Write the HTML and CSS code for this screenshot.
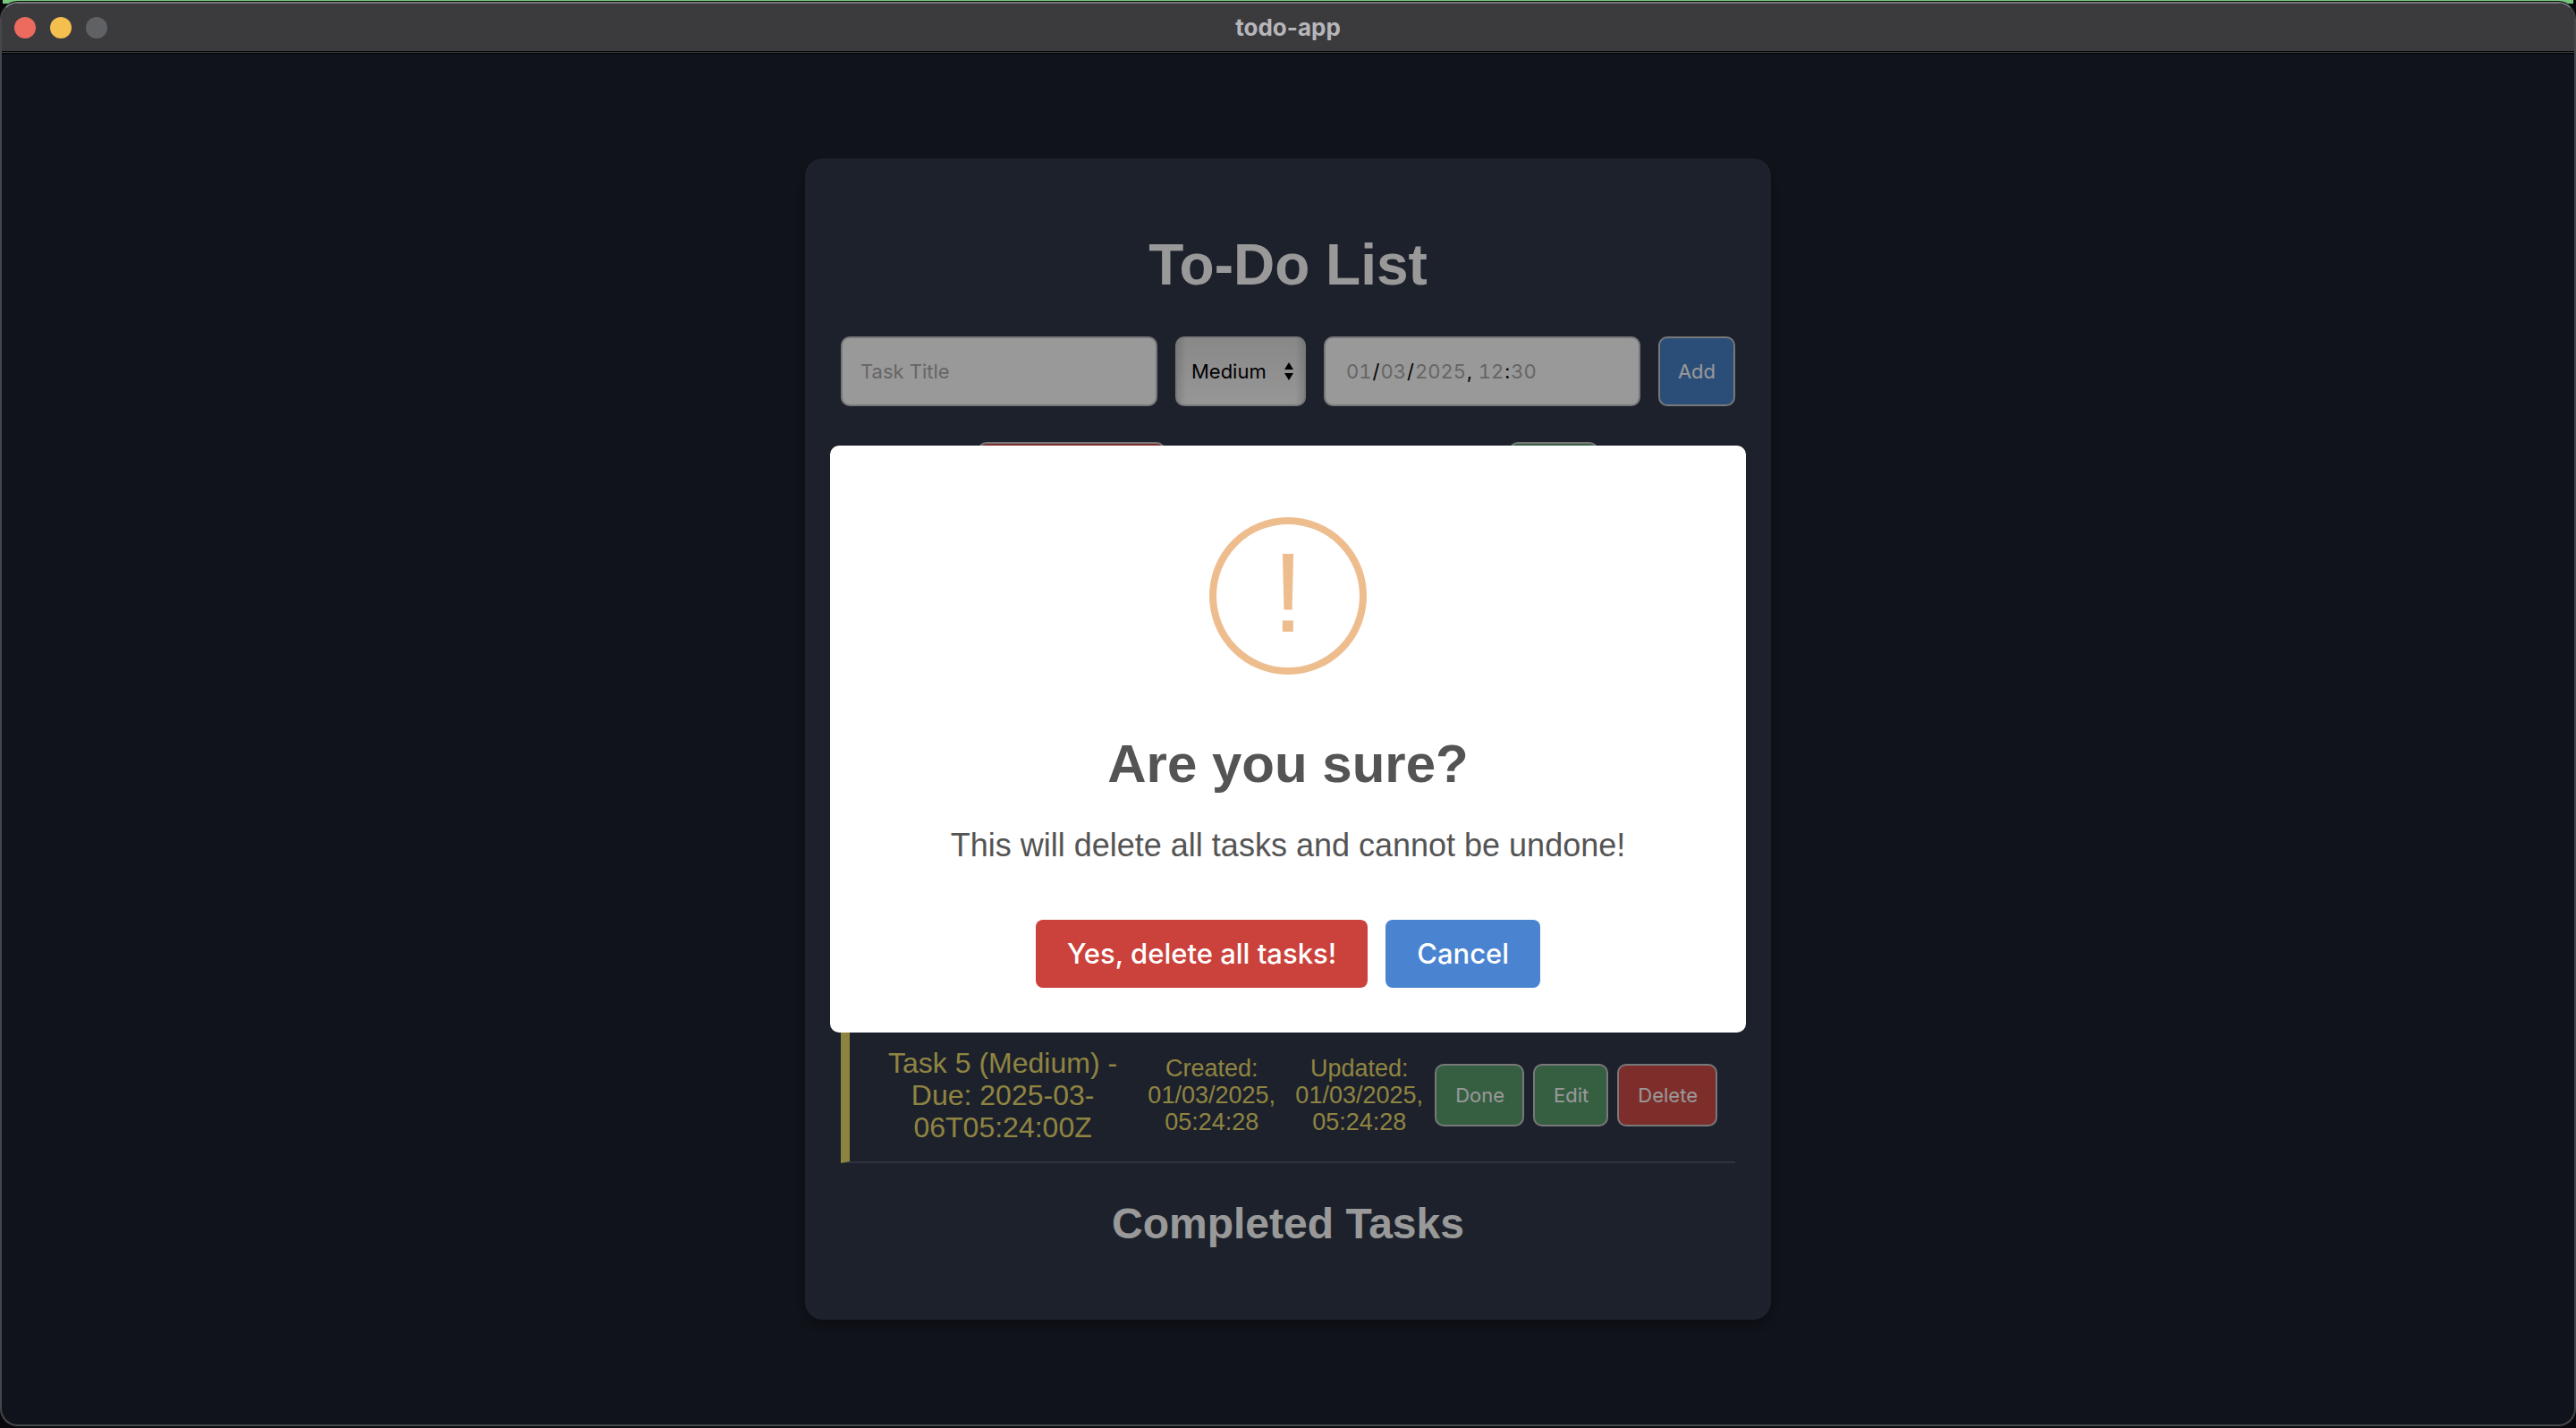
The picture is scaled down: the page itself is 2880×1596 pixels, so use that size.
FILE: index.html
```html
<!DOCTYPE html>
<html lang="en">
<head>
<meta charset="utf-8">
<title>todo-app</title>
<link rel="stylesheet" href="styles.css">
</head>
<body>
<div class="window">
  <header class="titlebar">
    <div class="lights">
      <button class="light light-close" type="button" aria-label="Close"></button>
      <button class="light light-minimise" type="button" aria-label="Minimise"></button>
      <button class="light light-zoom" type="button" aria-label="Zoom" disabled></button>
    </div>
    <span class="window-title">todo-app</span>
  </header>
  <div class="content">
    <main class="card">
      <h1 class="page-title">To-Do List</h1>
      <form class="task-form">
        <input class="field" type="text" placeholder="Task Title" aria-label="Task title">
        <div class="select-wrap">
          <select class="select" aria-label="Priority">
            <option>Low</option>
            <option selected>Medium</option>
            <option>High</option>
          </select>
          <svg class="select-arrows" viewBox="0 0 10 20" aria-hidden="true"><path d="M5 0 10 8H0zM5 20 0 12h10z"/></svg>
        </div>
        <input class="field field-date" type="datetime-local" value="2025-01-03T12:30" aria-label="Due date">
        <button class="btn btn-blue btn-add" type="button">Add</button>
      </form>
      <div class="toolbar">
        <button class="btn btn-red tool-wide" type="button" aria-label="Delete all tasks"></button>
        <button class="btn btn-green tool-narrow" type="button" aria-label="Export"></button>
      </div>
      <ul class="task-list">
        <li class="task">
          <span class="task-name">Task 5 (Medium) - Due: 2025-03-06T05:24:00Z</span>
          <span class="task-date">Created: 01/03/2025, 05:24:28</span>
          <span class="task-date">Updated: 01/03/2025, 05:24:28</span>
          <div class="task-actions">
            <button class="btn btn-green" type="button">Done</button>
            <button class="btn btn-green" type="button">Edit</button>
            <button class="btn btn-red" type="button">Delete</button>
          </div>
        </li>
      </ul>
      <h2 class="section-title">Completed Tasks</h2>
    </main>
    <div class="backdrop">
      <section class="modal" role="dialog" aria-modal="true" aria-labelledby="modal-title">
        <div class="modal-icon">!</div>
        <h2 class="modal-title" id="modal-title">Are you sure?</h2>
        <p class="modal-text">This will delete all tasks and cannot be undone!</p>
        <div class="modal-actions">
          <button class="modal-btn modal-confirm" type="button">Yes, delete all tasks!</button>
          <button class="modal-btn modal-cancel" type="button">Cancel</button>
        </div>
      </section>
    </div>
  </div>
</div>
</body>
</html>
```
FILE: styles.css
```css
* { box-sizing: border-box; }

body {
  margin: 0;
  padding: 2px 0;
  min-height: 100vh;
  display: flex;
  background: linear-gradient(#76c97e, #76c97e) center top / calc(100% - 6px) 4px no-repeat #0a080d;
  font-family: "Liberation Sans", Arial, sans-serif;
}

.window {
  flex: 1;
  display: flex;
  flex-direction: column;
  border-radius: 20px;
  overflow: hidden;
  border: 2px solid #46474b;
  border-top-color: #77787a;
  box-shadow: 0 0 0 1px #0b120e;
  background: #1c212d;
}

.titlebar {
  display: grid;
  grid-template-columns: 1fr auto 1fr;
  align-items: center;
  height: 56px;
  padding: 0 14px 3px;
  background: #3b3b3e;
  box-shadow: inset 0 -1px #000, inset 0 -2px #444, inset 0 -3px #000;
}

.lights { display: flex; gap: 16px; }

.light {
  width: 24px;
  height: 24px;
  padding: 0;
  border: 0;
  border-radius: 50%;
}
.light-close { background: #ed6a5e; }
.light-minimise { background: #f4bf4f; }
.light-zoom { background: #606165; }

.window-title {
  font: 700 26px/30px Inter, sans-serif;
  color: #b6b6ba;
}

.content {
  position: relative;
  flex: 1;
  display: flex;
  align-items: center;
  justify-content: center;
}

.card {
  width: 100%;
  max-width: 1080px;
  padding: 40px;
  border-radius: 20px;
  background: #303848;
  box-shadow: 0 8px 16px rgba(0, 0, 0, 0.3);
  color: #fff;
  text-align: center;
}

.page-title {
  margin: 43px 0;
  font-size: 64px;
  line-height: 73px;
}

.task-form { display: flex; gap: 20px; }

.field, .select, .btn {
  font: 400 22px/26px Inter, sans-serif;
  border: 2px solid #c8c8cc;
  border-radius: 10px;
}

.field {
  flex: 1;
  min-width: 0;
  height: 78px;
  padding: 0 20px;
  background: #fff;
  color: #000;
}
.field::placeholder { color: #aaa; opacity: 1; }

.field-date {
  padding: 0 18px 0 22px;
  font-variant-numeric: tabular-nums;
}
.field-date::-webkit-calendar-picker-indicator,
.field-date::-webkit-datetime-edit-ampm-field { display: none; }
.field-date::-webkit-datetime-edit-month-field,
.field-date::-webkit-datetime-edit-day-field,
.field-date::-webkit-datetime-edit-year-field,
.field-date::-webkit-datetime-edit-hour-field,
.field-date::-webkit-datetime-edit-minute-field { color: #aaa; }

.select-wrap { position: relative; }
.select {
  appearance: none;
  width: 146px;
  height: 78px;
  padding: 0 16px;
  color: #000;
  background: linear-gradient(90deg, rgba(0,0,0,.12), transparent 10px, transparent calc(100% - 10px), rgba(0,0,0,.12)), linear-gradient(#e4e4e4, #fbfbfb);
}
.select-arrows {
  position: absolute;
  right: 14px;
  top: 29px;
  width: 10px;
  height: 20px;
}

.btn {
  min-height: 70px;
  padding: 0 20px;
  color: #fff;
}
.btn-blue { background: #4982c8; }
.btn-green { background: #5a9e6e; }
.btn-red { background: #d24d46; }

.toolbar {
  display: flex;
  justify-content: space-between;
  margin: 40px 0;
  padding: 0 153px;
}
.tool-wide { width: 210px; }
.tool-narrow { width: 100px; }

.task-list {
  display: flex;
  flex-direction: column;
  justify-content: flex-end;
  min-height: 696px;
  margin: 0;
  padding: 0;
  list-style: none;
}

.task {
  display: grid;
  grid-template-columns: 1fr 165px 165px auto;
  align-items: center;
  padding: 20px;
  border-left: 10px solid #eddc6e;
  border-bottom: 2px solid #4e5567;
  color: #eddc6e;
}
.task-name { font-size: 32px; line-height: 36px; }
.task-date { font-size: 27px; line-height: 30px; padding: 0 10px; }
.task-actions { display: flex; gap: 10px; margin-left: 2px; }
.task-actions .btn { padding: 0 20px 0 21px; }

.section-title {
  margin: 40px 0;
  font-size: 48px;
  line-height: 55px;
}

.backdrop {
  position: absolute;
  inset: 0;
  display: flex;
  align-items: center;
  justify-content: center;
  background: rgba(0, 0, 0, 0.4);
}

.modal {
  width: 1024px;
  max-width: 100%;
  padding: 80px 40px 50px;
  border-radius: 10px;
  background: #fff;
  color: #545454;
  text-align: center;
}

.modal-icon {
  width: 176px;
  height: 176px;
  margin: 0 auto 66px;
  border: 8px solid #eebd8e;
  border-radius: 50%;
  color: #eebd8e;
  font-size: 126px;
  line-height: 154px;
}

.modal-title {
  margin: 0 0 34px;
  font-size: 60px;
  line-height: 68px;
}

.modal-text {
  margin: 0 0 60px;
  font-size: 36px;
  line-height: 46px;
}

.modal-actions { display: flex; justify-content: center; gap: 20px; }

.modal-btn {
  height: 76px;
  padding: 0 35px;
  border: 0;
  border-radius: 8px;
  color: #fff;
  font: 500 31px/38px Inter, sans-serif;
}
.modal-confirm { background: #cb413b; }
.modal-cancel { background: #4a83d0; }
```
